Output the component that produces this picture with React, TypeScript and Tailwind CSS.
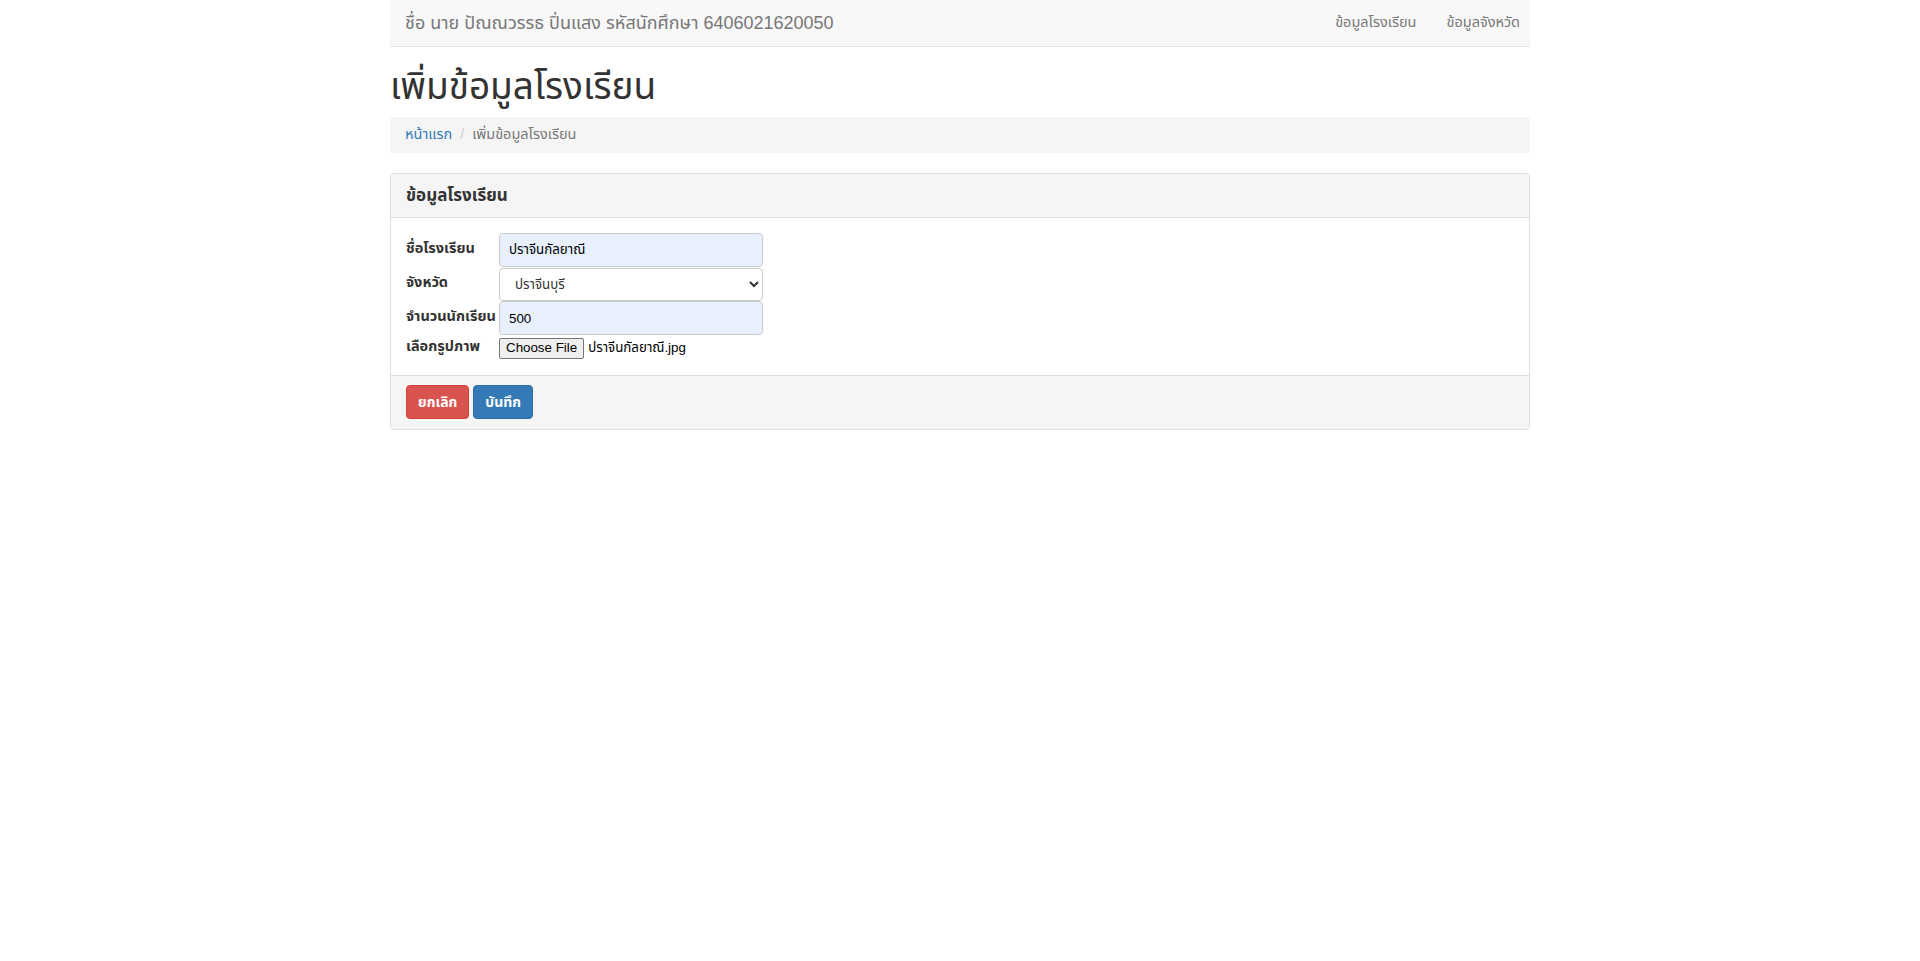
import React from "react";

const font = { fontFamily: '"Liberation Sans", "Noto Sans Thai", Tahoma, "DejaVu Sans", sans-serif' };

export default function App() {
  return (
    <div className="min-h-screen bg-white text-[14px] text-[#333]" style={font}>
      <div className="mx-auto w-[1170px] px-[15px]">
        <nav className="flex h-[47px] items-center justify-between border-b border-[#e7e7e7] bg-[#f8f8f8]">
          <a className="pl-[15px] text-[18px] leading-[20px] text-[#777]">
            ชื่อ นาย ปัณณวรรธ ปิ่นแสง รหัสนักศึกษา 6406021620050
          </a>
          <div className="flex gap-[30px] pr-[10px] text-[14.5px] text-[#777]">
            <a>ข้อมูลโรงเรียน</a>
            <a>ข้อมูลจังหวัด</a>
          </div>
        </nav>

        <h1 className="mt-[20px] mb-[10px] h-[40px] text-[37px] leading-[40px] text-[#333]">
          เพิ่มข้อมูลโรงเรียน
        </h1>

        <ol className="mb-[20px] flex h-[36px] items-center rounded-[4px] bg-[#f5f5f5] px-[15px] text-[14.5px]">
          <li className="text-[#337ab7]">หน้าแรก</li>
          <li className="px-[8px] text-[#ccc]">/</li>
          <li className="text-[#777]">เพิ่มข้อมูลโรงเรียน</li>
        </ol>

        <div className="overflow-hidden rounded-[4px] border border-[#ddd]">
          <div className="flex h-[44px] items-center border-b border-[#ddd] bg-[#f5f5f5] px-[15px]">
            <h3 className="text-[17px] font-bold text-[#333]">ข้อมูลโรงเรียน</h3>
          </div>
          <div className="px-[15px] pt-[15px] pb-[16px]">
            <div className="flex h-[34px] items-center">
              <label className="-mt-[2px] w-[93px] text-[14.5px] font-bold">ชื่อโรงเรียน</label>
              <input
                className="h-[34px] w-[264px] rounded-[4px] border border-[#ccc] bg-[#e8f0fe] px-[9px] text-[13.33px] text-black outline-none"
                defaultValue="ปราจีนกัลยาณี"
              />
            </div>
            <div className="flex h-[34px] items-center">
              <label className="-mt-[2px] w-[93px] text-[14.5px] font-bold">จังหวัด</label>
              <select className="h-[33px] w-[264px] rounded-[4px] border border-[#ccc] bg-white pl-[11px] text-[13.33px] text-[#333] outline-none">
                <option>ปราจีนบุรี</option>
              </select>
            </div>
            <div className="flex h-[34px] items-center">
              <label className="-mt-[2px] w-[93px] whitespace-nowrap text-[14.5px] font-bold">จำนวนนักเรียน</label>
              <input
                className="h-[34px] w-[264px] rounded-[4px] border border-[#ccc] bg-[#e8f0fe] px-[9px] text-[13.33px] text-black outline-none"
                defaultValue="500"
              />
            </div>
            <div className="mt-[2px] flex h-[22px] items-center">
              <label className="-mt-[2px] w-[93px] text-[14.5px] font-bold">เลือกรูปภาพ</label>
              <span className="flex items-center text-[13.33px] text-black">
                <span className="flex h-[21px] items-center rounded-[2px] border border-[#767676] bg-[#efefef] px-[6px]">
                  Choose File
                </span>
                <span className="ml-[4px]">ปราจีนกัลยาณี.jpg</span>
              </span>
            </div>
          </div>
          <div className="flex gap-[4px] border-t border-[#ddd] bg-[#f5f5f5] px-[15px] pt-[9px] pb-[10px]">
            <button className="h-[34px] rounded-[4px] border border-[#d43f3a] bg-[#d9534f] px-[11px] text-[14px] font-bold text-white">
              ยกเลิก
            </button>
            <button className="h-[34px] rounded-[4px] border border-[#2e6da4] bg-[#337ab7] px-[11px] text-[14px] font-bold text-white">
              บันทึก
            </button>
          </div>
        </div>
      </div>
    </div>
  );
}
